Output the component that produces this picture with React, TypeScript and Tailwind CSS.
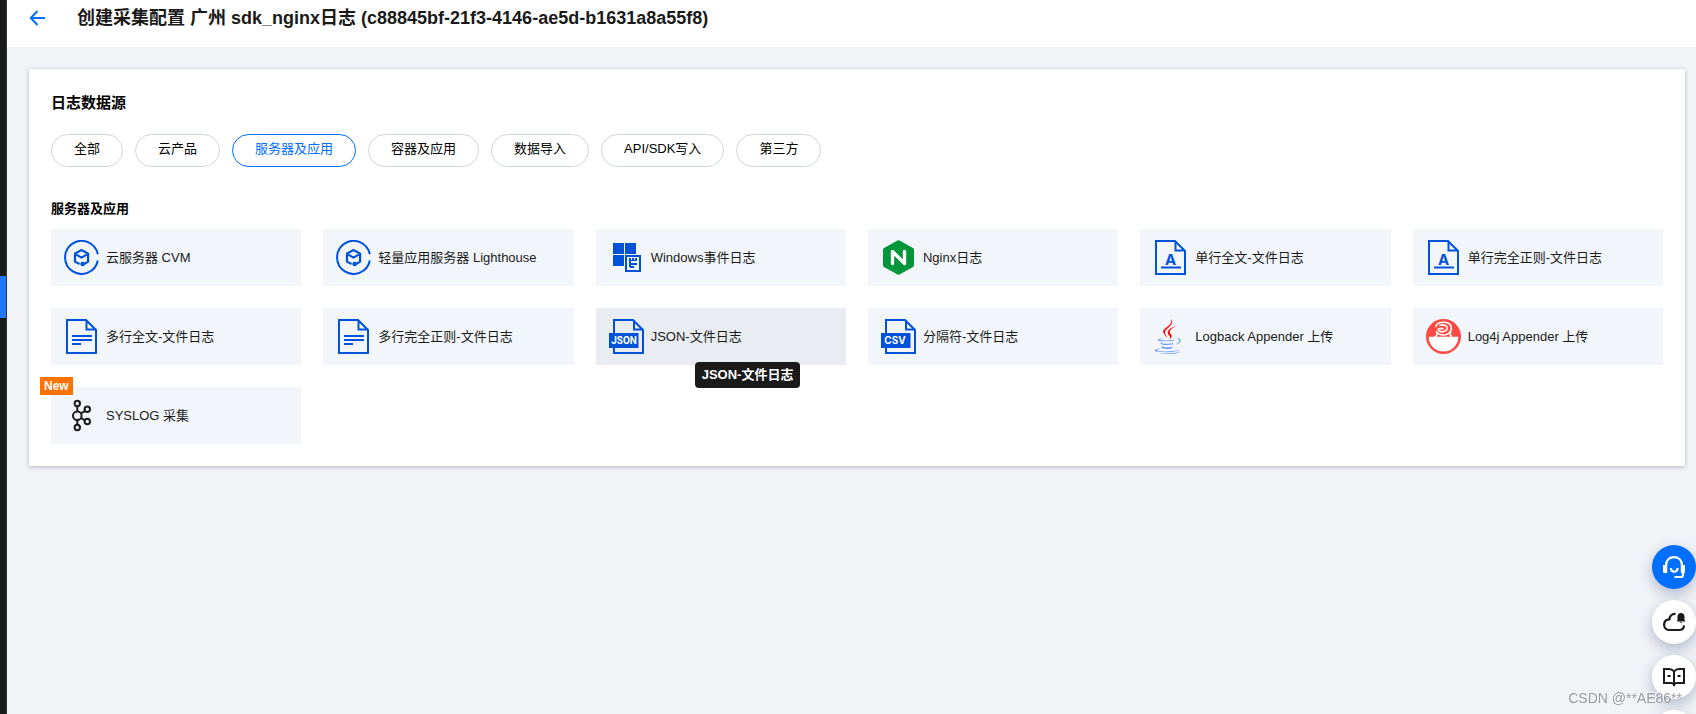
import type { ReactNode } from "react";
import clsx from "clsx";

const BLUE = "#0052d9";

function BackIcon() {
  return (
    <svg width="16" height="16" viewBox="0 0 16 16" fill="none" stroke="#006eff" strokeWidth="2">
      <path d="M8.5 1 1.8 8l6.7 7M2 8h14" />
    </svg>
  );
}

function CubeIcon() {
  return (
    <svg width="35" height="35" viewBox="0 0 35 35" fill="none" stroke={BLUE} strokeWidth="2">
      <path d="M33.8 14.3A16.5 16.5 0 1 0 33.8 20.500" />
      <path strokeWidth="2.2" d="M15.5 24 11 21.6v-8l6.5-3.6 6.6 3.6v8l-4.500 2.600M12.200 14.600l5.300 3 5.400-3" />
      <circle cx="18.6" cy="24" r="2.3" fill={BLUE} stroke="none" />
    </svg>
  );
}

function WindowsIcon() {
  return (
    <svg width="35" height="35" viewBox="0 0 35 35" fill={BLUE}>
      <path d="M4 3h11v11H4zM16 3h11v11H16zM4 15h11v11H4z" />
      <path fill="#f2f6fb" d="M15 14h18v19H15z" />
      <path fillRule="evenodd" d="M16 15h16v17H16zM18 17v13h12V17z" />
      <path d="M20 18h2v9h-2zM23 18h2v3h-2zM26 18h2v3h-2zM20 20h8v1h-8zM21 23h7v2h-7zM21 26h4v2h-4z" />
    </svg>
  );
}

function NginxIcon() {
  return (
    <svg width="35" height="35" viewBox="0 0 35 35">
      <path
        fill="#009639"
        d="M16.5.5a2 2 0 0 1 2 0L32 8a2 2 0 0 1 1 1.7v15.6A2 2 0 0 1 32 27l-13.5 7.5a2 2 0 0 1-2 0L3 27a2 2 0 0 1-1-1.7V9.7A2 2 0 0 1 3 8z"
      />
      <path
        d="M11.500 23.500v-12l12 12v-12"
        fill="none"
        stroke="#fff"
        strokeWidth="3.4"
        strokeLinecap="round"
        strokeLinejoin="round"
      />
    </svg>
  );
}

function LetterDocIcon() {
  return (
    <svg width="35" height="35" viewBox="0 0 35 35" fill="none" stroke={BLUE} strokeWidth="2">
      <path d="M3 1h19l10 10v23H3z" />
      <path d="M22.5 1.5v9H32" />
      <path d="M8 27.5h20" />
      <text x="17.5" y="25" textAnchor="middle" fill={BLUE} stroke="none" className="[font-family:Inter,sans-serif] text-[15px] font-bold">
        A
      </text>
    </svg>
  );
}

function LinesDocIcon() {
  return (
    <svg width="35" height="35" viewBox="0 0 35 35" fill="none" stroke={BLUE} strokeWidth="2">
      <path d="M3 1h19l10 10v23H3z" />
      <path d="M22.5 1.5v9H32" />
      <path d="M8 17h20M8 21h20M8 25h9" />
    </svg>
  );
}

function BannerDocIcon({ children }: { children: ReactNode }) {
  return (
    <svg width="35" height="35" viewBox="0 0 35 35" fill="none" stroke={BLUE} strokeWidth="2">
      <path d="M5 14V1h19l10 10v23H5v-5" />
      <path d="M25 1.5v9h9" />
      <path fill={BLUE} stroke="none" d="M0 14h29.5v15H0z" />
      {children}
    </svg>
  );
}

function JavaIcon() {
  return (
    <svg width="35" height="35" viewBox="-24 0 512 512">
      <path
        fill="#f01010"
        d="M192.34 280.8c-19-42.7-83.1-80.2 0-145.8C296 53.2 242.84 0 242.84 0c21.5 84.5-75.6 110.1-110.7 162.6-23.9 35.9 11.7 74.4 60.2 118.2zM306.94 104.6c.1 0-175.2 43.8-91.5 140.2 24.7 28.4-6.5 54-6.5 54s62.7-32.4 33.9-72.9c-26.9-37.8-47.5-56.6 64.1-121.3z"
      />
      <path
        fill="#6f9df5"
        d="M277.74 312.9c9.8-6.7 23.4-12.5 23.4-12.5s-38.7 7-77.2 10.2c-47.1 3.9-97.7 4.7-123.1 1.3-60.1-8 33-30.1 33-30.1s-36.1-2.4-80.6 19c-52.5 25.4 130 37 224.5 12.1zM300.84 375.1a12.19 12.19 0 0 1-2 2.6c128.3-33.7 81.1-118.9 19.8-97.3a17.33 17.33 0 0 0-8.2 6.3 70.45 70.45 0 0 1 11-3c31-6.5 75.5 41.5-20.6 91.4zM348 437.4s14.5 11.9-15.9 21.2c-57.9 17.5-240.8 22.8-291.6.7-18.3-7.9 16-19 26.8-21.3 11.2-2.4 17.7-2 17.7-2-20.3-14.3-131.3 28.1-56.4 40.2C232.84 509.4 401 461.3 348 437.4zM124.44 396c-78.7 22 47.9 67.4 148.1 24.5a185.89 185.89 0 0 1-28.2-13.8c-44.7 8.5-65.4 9.1-106 4.5-33.5-3.8-13.9-15.2-13.9-15.2zm179.8 97.2c-78.7 14.8-175.8 13.1-233.3 3.6 0-.1 11.8 9.7 72.4 13.6 92.2 5.9 233.8-3.3 237.1-46.9 0 0-6.4 16.5-76.2 29.7zM260.64 353c-59.2 11.4-93.5 11.1-136.8 6.6-33.5-3.5-11.6-19.7-11.6-19.7-86.8 28.8 48.2 61.4 169.5 25.9a60.37 60.37 0 0 1-21.1-12.8z"
      />
    </svg>
  );
}

function Log4jIcon() {
  return (
    <svg width="35" height="35" viewBox="0 0 35 35" fill="none">
      <circle cx="17.5" cy="17.5" r="17.5" fill="#fb4a43" />
      <path fill="#fff" d="M2.7 17.7h29.600a14.800 14.800 0 0 1-29.600 0z" />
      <g stroke="#fff" strokeWidth="1.6" strokeLinecap="round">
        <path d="M10 7.500C10.500 2.500 22 1.500 24.800 6.500c1.800 4-1 8.500-5 9.300-3 .5-6.500 0-8.300-1.800" />
        <path d="M14 6.300c3-1 7-.3 7.300 2.700.2 3-3.800 4-6.500 3.600-3-.5-3.300-3-1.300-3H17" />
        <path d="M10.500 12.500c1 2 .5 4-1.500 5.500M24.500 12.500c-.7 2-.3 4 1 5.500" />
      </g>
    </svg>
  );
}

function KafkaIcon() {
  return (
    <svg width="35" height="35" viewBox="0 0 35 35" fill="none" stroke="#1d1a1b" strokeWidth="2">
      <circle cx="13.3" cy="5.5" r="2.7" />
      <circle cx="13.3" cy="17.7" r="4.3" />
      <circle cx="13.3" cy="29.5" r="2.7" />
      <circle cx="23.3" cy="11.2" r="2.7" />
      <circle cx="23.3" cy="23.5" r="2.7" />
      <path d="M13.3 8v5.5M13.3 22v5M17 15.500l4-2.600M17 20l4 2.300" />
    </svg>
  );
}

function HeadsetIcon() {
  return (
    <svg width="22" height="22" viewBox="0 0 22 22" fill="none" stroke="#fff" strokeWidth="2.2">
      <path d="M3 9.500C3 4 6.500 1.100 11 1.100s8 2.900 8 8.400M20 15v4a2 2 0 0 1-2 2h-6.500" />
      <path d="M7.8 12c.3 5 6.600 5 6.900 0" />
      <path fill="#fff" stroke="none" d="M0 9h4.200v8H1a1 1 0 0 1-1-1zM17.800 9H22v7a1 1 0 0 1-1 1h-3.200z" />
    </svg>
  );
}

function CloudBellIcon() {
  return (
    <svg width="22" height="22" viewBox="0 0 22 22" fill="none" stroke="#1a1a1a" strokeWidth="2.2">
      <path d="M12.500 3C9 2.700 6.500 5 6.500 8.300 3 8.500 1.100 10.500 1.100 13.500S3 19 6 19h10c3 0 5-1.500 5-4.500" />
      <path fill="#1a1a1a" stroke="none" d="M14.500 9V5.500C14.500 3.500 16 2 18 2s3.500 1.500 3.500 3.500V9l.5 1v.5h-8V10zM16.500 11.200h3l-1.500 1z" />
    </svg>
  );
}

function BookIcon() {
  return (
    <svg width="22" height="22" viewBox="0 0 22 22" fill="none" stroke="#1a1a1a" strokeWidth="2">
      <path d="M11 5.500C9.500 3.600 8 3 6 3H1v14h7c1.500 0 2.400.6 3 1.800.6-1.200 1.500-1.800 3-1.800h7V3h-5c-2 0-3.500.6-5 2.500zM11 5.500V20M4.500 10h3M14.500 10h3" />
    </svg>
  );
}

const filters = ["全部", "云产品", "服务器及应用", "容器及应用", "数据导入", "API/SDK写入", "第三方"];
const activeFilter = "服务器及应用";

interface Source {
  name: string;
  icon: ReactNode;
  isNew?: boolean;
  hovered?: boolean;
}

const sources: Source[] = [
  { name: "云服务器 CVM", icon: <CubeIcon /> },
  { name: "轻量应用服务器 Lighthouse", icon: <CubeIcon /> },
  { name: "Windows事件日志", icon: <WindowsIcon /> },
  { name: "Nginx日志", icon: <NginxIcon /> },
  { name: "单行全文-文件日志", icon: <LetterDocIcon /> },
  { name: "单行完全正则-文件日志", icon: <LetterDocIcon /> },
  { name: "多行全文-文件日志", icon: <LinesDocIcon /> },
  { name: "多行完全正则-文件日志", icon: <LinesDocIcon /> },
  {
    name: "JSON-文件日志",
    hovered: true,
    icon: (
      <BannerDocIcon>
        <text x="15" y="25" textAnchor="middle" fill="#fff" stroke="none" className="[font-family:Roboto,sans-serif] text-[10px] font-bold">
          JSON
        </text>
      </BannerDocIcon>
    ),
  },
  {
    name: "分隔符-文件日志",
    icon: (
      <BannerDocIcon>
        <text x="14" y="25" textAnchor="middle" fill="#fff" stroke="none" className="[font-family:Inter,sans-serif] text-[10px] font-bold">
          CSV
        </text>
      </BannerDocIcon>
    ),
  },
  { name: "Logback Appender 上传", icon: <JavaIcon /> },
  { name: "Log4j Appender 上传", icon: <Log4jIcon /> },
  { name: "SYSLOG 采集", icon: <KafkaIcon />, isNew: true },
];

function SourceTile({ name, icon, isNew, hovered }: Source) {
  return (
    <div className="relative">
      <button
        type="button"
        className={clsx(
          "flex h-[57px] w-full items-center gap-[7px] px-[13px] text-left text-[13px] text-[#1a1a1a]",
          hovered ? "bg-[#e9edf2]" : "bg-[#f2f6fb]",
        )}
      >
        <span className="shrink-0">{icon}</span>
        {name}
      </button>
      {isNew && (
        <span className="absolute -top-[10px] -left-[11px] bg-[#ff7200] px-1 text-xs leading-[18px] font-bold text-white">
          New
        </span>
      )}
      {hovered && (
        <span
          role="tooltip"
          className="absolute top-[54px] left-[99px] z-10 rounded bg-[#1a1a1a] px-[7px] text-[13px] leading-[26px] font-bold whitespace-nowrap text-white"
        >
          {name}
        </span>
      )}
    </div>
  );
}

function FloatingButton({ label, primary, children }: { label: string; primary?: boolean; children?: ReactNode }) {
  return (
    <button
      type="button"
      aria-label={label}
      className={clsx(
        "flex size-11 shrink-0 items-center justify-center rounded-full shadow-[0_5px_14px_rgba(55,75,120,0.35)]",
        primary ? "bg-[#006eff]" : "bg-white",
      )}
    >
      {children}
    </button>
  );
}

export default function App() {
  return (
    <div className="flex min-h-screen bg-[#f2f3f7] font-['Liberation_Sans','Noto_Sans_CJK_SC',sans-serif] text-black">
      <aside className="w-[7px] shrink-0 border-r border-[#333] bg-[#1a1a1a]">
        <div className="h-[276px]" />
        <div className="h-[42px] bg-[#2277ff]" />
      </aside>

      <div className="min-w-0 flex-1">
        <header className="flex h-[47px] items-start bg-white pl-[22px]">
          <button type="button" aria-label="返回" className="mt-[10px]">
            <BackIcon />
          </button>
          <h1 className="ml-8 text-[18px] leading-9 font-bold text-[#1a1a1a]">
            创建采集配置 广州 sdk_nginx日志 (c88845bf-21f3-4146-ae5d-b1631a8a55f8)
          </h1>
        </header>

        <main className="py-[22px] pr-[11px] pl-[22px]">
          <section className="bg-white p-[22px] shadow-[0_1px_4px_rgba(30,35,60,0.3)]">
            <h2 className="text-[15px] leading-6 font-bold">日志数据源</h2>

            <div className="mt-[19px] flex flex-wrap gap-3">
              {filters.map((filter) => (
                <button
                  key={filter}
                  type="button"
                  className={clsx(
                    "h-[33px] rounded-full border px-[22px] pb-1 text-[13px]",
                    filter === activeFilter ? "border-[#006eff] text-[#006eff]" : "border-[#cfd5de]",
                  )}
                >
                  {filter}
                </button>
              ))}
            </div>

            <h3 className="mt-8 text-[13px] leading-5 font-bold">服务器及应用</h3>
            <div className="mt-[10px] grid grid-cols-6 gap-[22px]">
              {sources.map((source) => (
                <SourceTile key={source.name} {...source} />
              ))}
            </div>
          </section>
        </main>
      </div>

      <div className="fixed top-[545px] right-0 flex flex-col gap-[11px]">
        <FloatingButton label="在线客服" primary>
          <HeadsetIcon />
        </FloatingButton>
        <FloatingButton label="消息通知">
          <CloudBellIcon />
        </FloatingButton>
        <FloatingButton label="文档">
          <BookIcon />
        </FloatingButton>
        <FloatingButton label="更多" />
      </div>

      <p className="pointer-events-none fixed right-[14px] bottom-[6px] text-[14px] leading-5 text-[#9a9a9e] [text-shadow:-1px_-1px_0_#fff]">
        CSDN @**AE86**
      </p>
    </div>
  );
}
